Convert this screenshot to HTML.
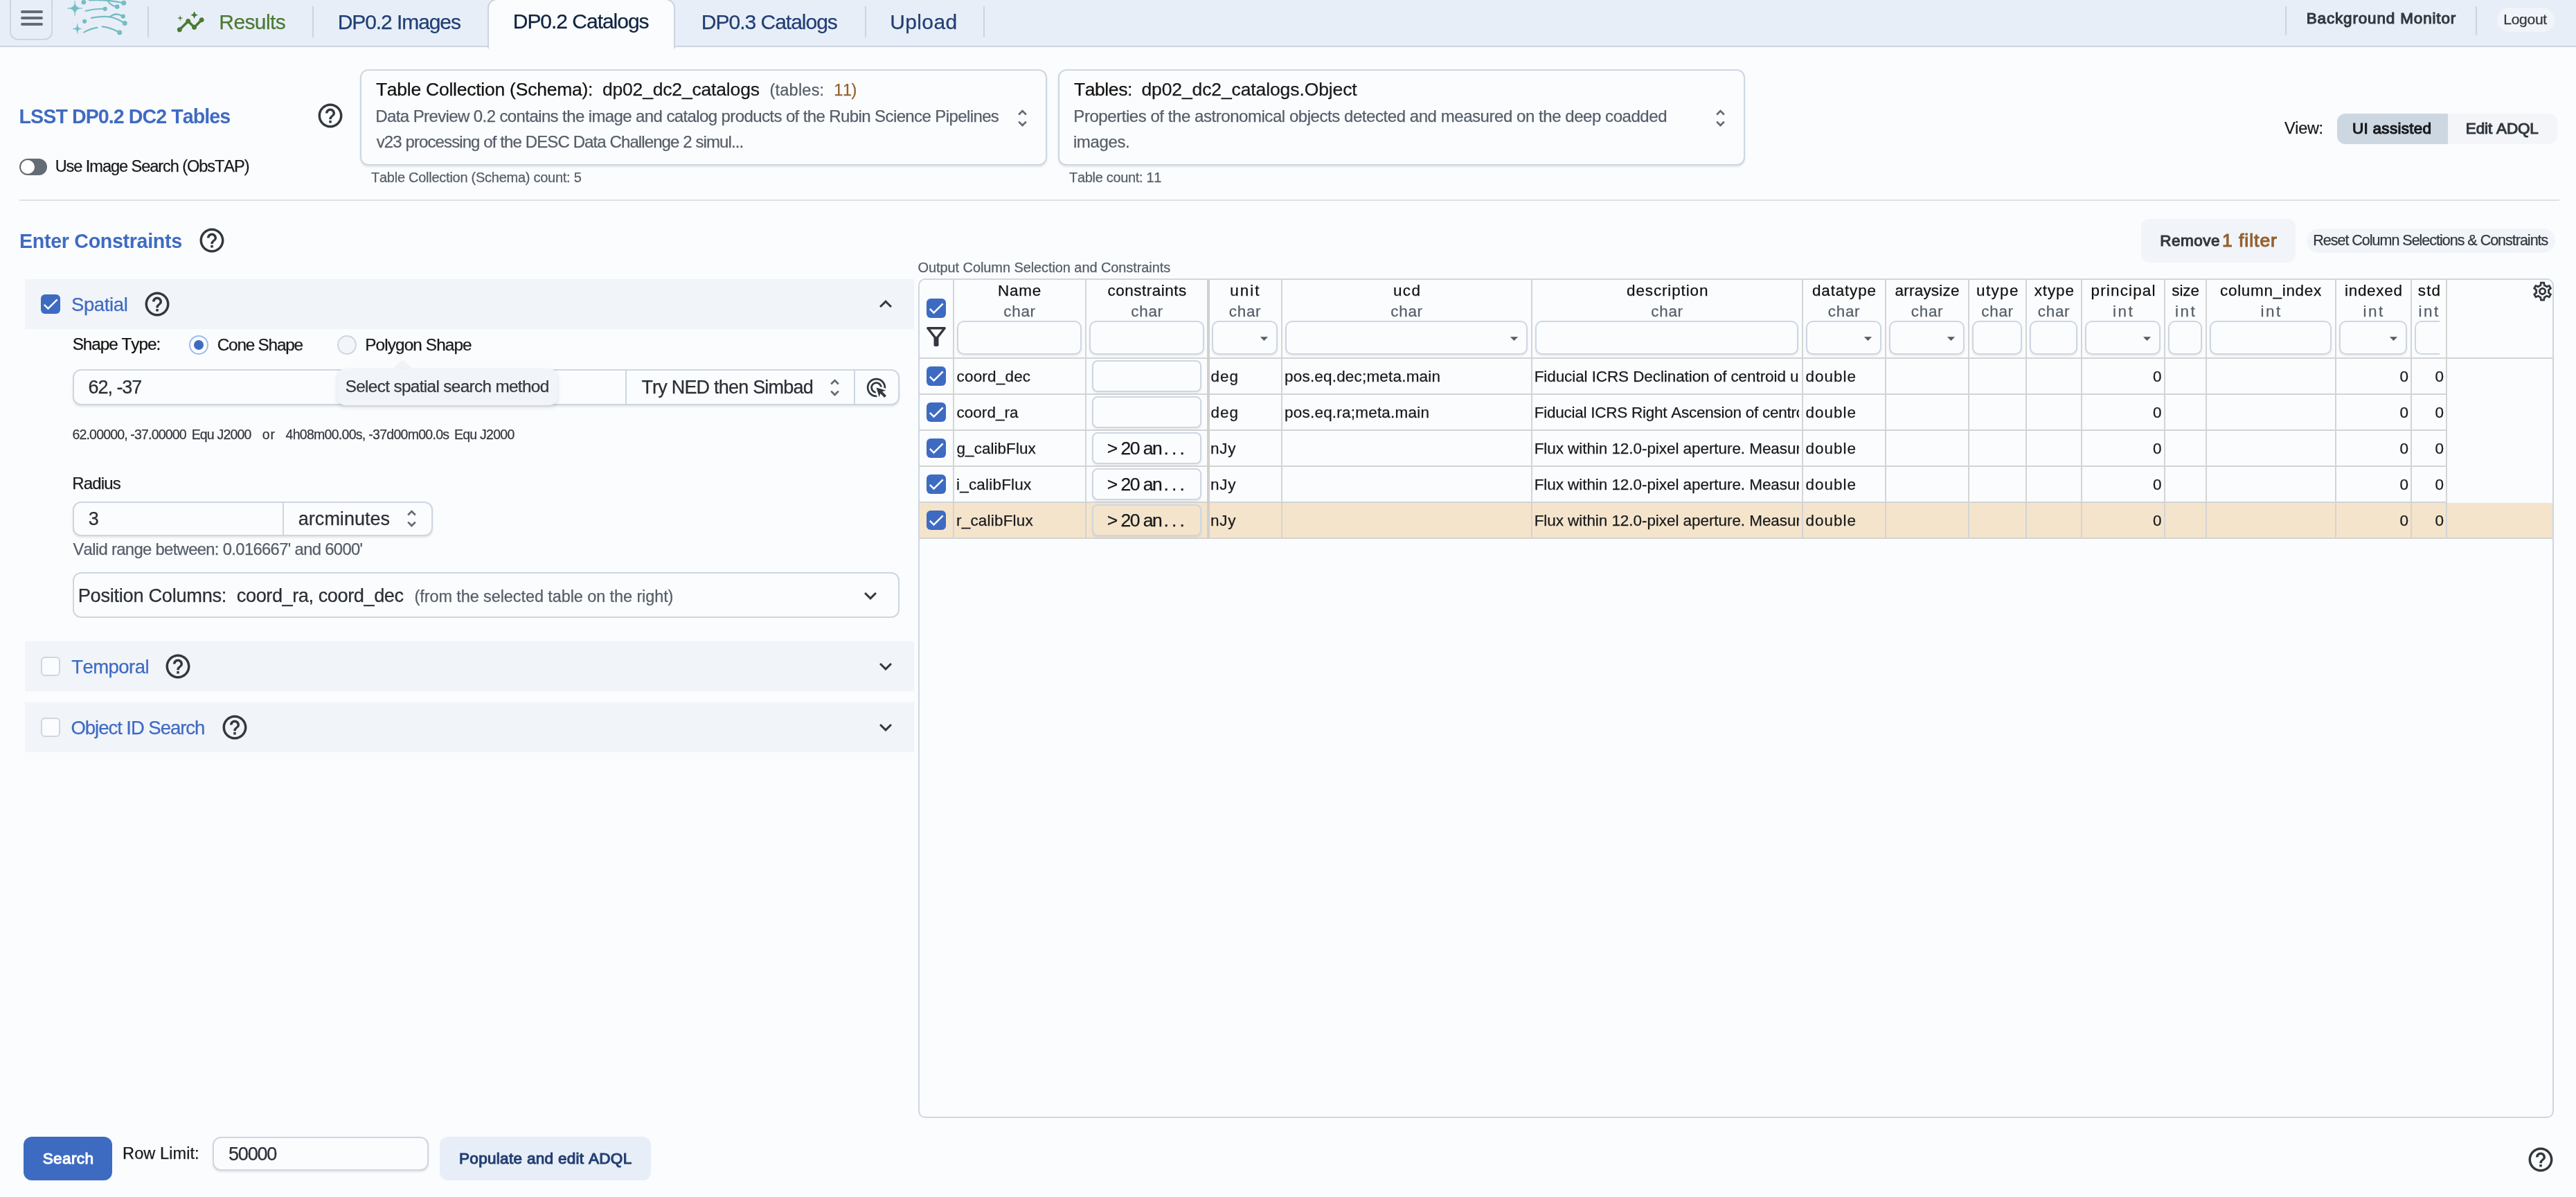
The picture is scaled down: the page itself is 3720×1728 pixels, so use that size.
<!DOCTYPE html>
<html><head><meta charset="utf-8"><title>TAP Search</title><style>html,body{margin:0;padding:0}
body{width:3720px;height:1728px;position:relative;overflow:hidden;background:#fbfcfe;font-family:"Liberation Sans",sans-serif;font-kerning:none}
.t{position:absolute;white-space:pre;font-kerning:none;-webkit-text-stroke:0.25px currentColor}
.b{position:absolute;box-sizing:content-box}
.i{position:absolute;display:block}
#root{position:absolute;left:0;top:0;width:3720px;height:1728px;will-change:transform}
</style></head><body><div id="root">
<div class="b" style="left:0px;top:0px;width:3720px;height:66px;background:#e8eef8;border-bottom:2px solid #cdd4df;"></div>
<div class="b" style="left:14.4px;top:-10px;width:58px;height:63.6px;border:2px solid #cfd5df;border-radius:12px;"></div>
<div class="b" style="left:30px;top:15.2px;width:32px;height:4px;background:#636b74;border-radius:2px;"></div>
<div class="b" style="left:30px;top:24px;width:32px;height:4px;background:#636b74;border-radius:2px;"></div>
<div class="b" style="left:30px;top:32.7px;width:32px;height:4px;background:#636b74;border-radius:2px;"></div>
<svg class="i" style="left:90px;top:0px;filter:blur(0.7px)" width="100" height="56" viewBox="90 0 100 56" fill="none" stroke="#74bdc2" stroke-width="2.3" stroke-linecap="round">
<path d="M108.1 1.5 Q107.7 12.4 119.1 12 Q107.7 11.6 108.1 22.8 Q108.5 11.6 97 12 Q108.5 12.4 108.1 1.5 Z" fill="#74bdc2" stroke="#74bdc2" stroke-width="0.6" stroke-linejoin="round"/>
<path d="M111.8 34.3 Q111.6 41.8 118.1 41.6 Q111.6 41.4 111.8 48.6 Q112 41.4 104.8 41.6 Q112 41.8 111.8 34.3 Z" fill="#74bdc2" stroke="#74bdc2" stroke-width="0.6" stroke-linejoin="round"/>
<circle cx="120.8" cy="3.3" r="3.3" fill="#74bdc2" stroke="none"/>
<circle cx="122.1" cy="30.8" r="3.1" fill="#74bdc2" stroke="none"/>
<path d="M123.6 15.8 Q137 12.3 150 12.8" stroke-width="2.1"/><circle cx="151.7" cy="12.8" r="3.1" fill="#74bdc2" stroke="none"/>
<path d="M129 0.3 Q155 -0.8 177 4"/><circle cx="178.7" cy="4.3" r="3.5" fill="#74bdc2" stroke="none"/>
<path d="M155.5 0.6 Q158.5 7.5 167.5 9.5"/><circle cx="169.2" cy="9.8" r="3.3" fill="#74bdc2" stroke="none"/>
<path d="M132 25.8 Q150 22.6 160.5 24.7 Q171 27.5 179 33" stroke-width="2.2"/><circle cx="180.2" cy="33.6" r="3.5" fill="#74bdc2" stroke="none"/>
<path d="M159 24 Q167 17.5 176.5 23"/><circle cx="177.7" cy="23.6" r="3.2" fill="#74bdc2" stroke="none"/>
<path d="M121.2 46.7 Q130 41.5 140.4 39.9" stroke-width="2.1"/>
<path d="M147.8 38.4 Q160 40 171 46"/><circle cx="172.7" cy="46.9" r="3.5" fill="#74bdc2" stroke="none"/>
</svg>
<div class="b" style="left:213px;top:9px;width:2px;height:45px;background:#cdd4df;"></div>
<svg class="i" style="left:253.65px;top:10.55px" width="42.5" height="42.5" viewBox="0 0 24 24" fill="#4a7a33"><path d="M21 8c-1.45 0-2.26 1.44-1.93 2.51l-3.55 3.56c-.3-.09-.74-.09-1.04 0l-2.55-2.55C12.27 10.45 11.46 9 10 9c-1.45 0-2.27 1.44-1.93 2.52l-4.56 4.55C2.44 15.74 1 16.55 1 18c0 1.1.9 2 2 2 1.45 0 2.26-1.44 1.93-2.51l4.55-4.56c.3.09.74.09 1.04 0l2.55 2.55C12.73 16.55 13.54 18 15 18c1.45 0 2.27-1.44 1.93-2.52l3.56-3.55c1.07.33 2.51-.48 2.51-1.93 0-1.1-.9-2-2-2z"/><path d="m15 9 .94-2.07L18 6l-2.06-.93L15 3l-.92 2.07L12 6l2.08.93zM3.5 11 4 9l2-.5L4 8l-.5-2L3 8l-2 .5L3 9z"/></svg>
<span class="t" style="left:316.34px;top:17px;font-size:30px;line-height:30px;color:#4a7a33;letter-spacing:-0.615px;">Results</span>
<div class="b" style="left:451px;top:9px;width:2px;height:45px;background:#cdd4df;"></div>
<span class="t" style="left:487.74px;top:17px;font-size:30px;line-height:30px;color:#213f73;letter-spacing:-1.077px;">DP0.2 Images</span>
<div class="b" style="left:704px;top:-2px;width:267px;height:70px;background:#fbfcfe;border:2px solid #cdd4df;border-radius:14px 14px 0 0;border-bottom:none;"></div>
<span class="t" style="left:740.74px;top:16px;font-size:30px;line-height:30px;color:#10233f;letter-spacing:-1.021px;">DP0.2 Catalogs</span>
<span class="t" style="left:1012.84px;top:17px;font-size:30px;line-height:30px;color:#213f73;letter-spacing:-1.006px;">DP0.3 Catalogs</span>
<div class="b" style="left:1249px;top:9px;width:2px;height:45px;background:#cdd4df;"></div>
<span class="t" style="left:1285.29px;top:17px;font-size:30px;line-height:30px;color:#213f73;letter-spacing:0.356px;">Upload</span>
<div class="b" style="left:1420px;top:9px;width:2px;height:45px;background:#cdd4df;"></div>
<div class="b" style="left:3300px;top:9px;width:2px;height:42px;background:#cdd4df;"></div>
<span class="t" style="left:3330.75px;top:16px;font-size:22.5px;line-height:22.5px;color:#32383e;-webkit-text-stroke-width:1.1px;letter-spacing:0.833px;">Background Monitor</span>
<div class="b" style="left:3575px;top:9px;width:2px;height:42px;background:#cdd4df;"></div>
<div class="b" style="left:3606px;top:11px;width:83px;height:35px;background:#f1f4f9;border-radius:18px;"></div>
<span class="t" style="left:3615.28px;top:17px;font-size:21px;line-height:21px;color:#32383e;letter-spacing:-0.271px;">Logout</span>
<span class="t" style="left:27.59px;top:154px;font-size:28.6px;line-height:28.6px;color:#3e6bc2;font-weight:700;-webkit-text-stroke-width:0;letter-spacing:-0.932px;">LSST DP0.2 DC2 Tables</span>
<svg class="i" style="left:456.00px;top:146.00px" width="42" height="42" viewBox="0 0 24 24" fill="#32383e"><path d="M11 18h2v-2h-2v2zm1-16C6.48 2 2 6.48 2 12s4.48 10 10 10 10-4.48 10-10S17.52 2 12 2zm0 18c-4.41 0-8-3.59-8-8s3.59-8 8-8 8 3.59 8 8-3.59 8-8 8zm0-14c-2.21 0-4 1.79-4 4h2c0-1.1.9-2 2-2s2 .9 2 2c0 2-3 1.75-3 5h2c0-2.25 3-2.5 3-5 0-2.21-1.79-4-4-4z"/></svg>
<div class="b" style="left:28px;top:229px;width:40px;height:24px;background:#636b74;border-radius:12px;"></div>
<div class="b" style="left:30px;top:231px;width:20px;height:20px;background:#fff;border-radius:10px;"></div>
<span class="t" style="left:79.69px;top:229px;font-size:23.5px;line-height:23.5px;color:#171a1c;letter-spacing:-1.035px;">Use Image Search (ObsTAP)</span>
<div class="b" style="left:520px;top:100px;width:988px;height:135px;background:#fbfcfe;border:2px solid #cdd7e1;border-radius:12px;box-shadow:0 2px 3px rgba(21,21,21,0.10);"></div>
<span class="t" style="left:542.90px;top:116px;font-size:26.5px;line-height:26.5px;color:#111;letter-spacing:-0.244px;">Table Collection (Schema):</span>
<span class="t" style="left:869.89px;top:116px;font-size:26.5px;line-height:26.5px;color:#171a1c;letter-spacing:-0.174px;">dp02_dc2_catalogs</span>
<span class="t" style="left:1111.54px;top:119px;font-size:23.5px;line-height:23.5px;color:#555e68;letter-spacing:0.220px;">(tables:</span>
<span class="t" style="left:1204.21px;top:119px;font-size:23.5px;line-height:23.5px;color:#93612f;letter-spacing:-0.359px;">11)</span>
<span class="t" style="left:542.33px;top:156px;font-size:24px;line-height:24px;color:#555e68;letter-spacing:-0.605px;">Data Preview 0.2 contains the image and catalog products of the Rubin Science Pipelines</span>
<span class="t" style="left:543.72px;top:193px;font-size:24px;line-height:24px;color:#555e68;letter-spacing:-0.898px;">v23 processing of the DESC Data Challenge 2 simul...</span>
<svg class="i" style="left:1459.50px;top:154.00px" width="33" height="33" viewBox="0 0 24 24" fill="#636b74"><path d="M12 5.83 15.17 9l1.41-1.41L12 3 7.41 7.59 8.83 9 12 5.83zm0 12.34L8.83 15l-1.41 1.41L12 21l4.59-4.59L15.17 15 12 18.17z"/></svg>
<span class="t" style="left:536.05px;top:246px;font-size:20px;line-height:20px;color:#555e68;letter-spacing:-0.260px;">Table Collection (Schema) count: 5</span>
<div class="b" style="left:1528px;top:100px;width:988px;height:135px;background:#fbfcfe;border:2px solid #cdd7e1;border-radius:12px;box-shadow:0 2px 3px rgba(21,21,21,0.10);"></div>
<span class="t" style="left:1550.90px;top:116px;font-size:26.5px;line-height:26.5px;color:#111;letter-spacing:-0.398px;">Tables:</span>
<span class="t" style="left:1648.39px;top:116px;font-size:26.5px;line-height:26.5px;color:#171a1c;letter-spacing:-0.109px;">dp02_dc2_catalogs.Object</span>
<span class="t" style="left:1550.33px;top:156px;font-size:24px;line-height:24px;color:#555e68;letter-spacing:-0.448px;">Properties of the astronomical objects detected and measured on the deep coadded</span>
<span class="t" style="left:1549.89px;top:193px;font-size:24px;line-height:24px;color:#555e68;letter-spacing:-0.373px;">images.</span>
<svg class="i" style="left:2467.50px;top:154.00px" width="33" height="33" viewBox="0 0 24 24" fill="#636b74"><path d="M12 5.83 15.17 9l1.41-1.41L12 3 7.41 7.59 8.83 9 12 5.83zm0 12.34L8.83 15l-1.41 1.41L12 21l4.59-4.59L15.17 15 12 18.17z"/></svg>
<span class="t" style="left:1544.05px;top:246px;font-size:20px;line-height:20px;color:#555e68;letter-spacing:-0.318px;">Table count: 11</span>
<span class="t" style="left:3298.90px;top:174px;font-size:23.5px;line-height:23.5px;color:#171a1c;letter-spacing:-0.304px;">View:</span>
<div class="b" style="left:3375px;top:164px;width:160px;height:44px;background:#cdd7e1;border-radius:12px 0 0 12px;"></div>
<div class="b" style="left:3535px;top:164px;width:158px;height:44px;background:#f3f5f9;border-radius:0 12px 12px 0;"></div>
<span class="t" style="left:3396.96px;top:175px;font-size:22.5px;line-height:22.5px;color:#171a1c;-webkit-text-stroke-width:1.1px;letter-spacing:0.289px;">UI assisted</span>
<span class="t" style="left:3560.85px;top:175px;font-size:22.5px;line-height:22.5px;color:#32383e;-webkit-text-stroke-width:1.1px;letter-spacing:-0.162px;">Edit ADQL</span>
<div class="b" style="left:28px;top:288px;width:3668px;height:2px;background:#dde1e8;"></div>
<span class="t" style="left:28.09px;top:334px;font-size:28.6px;line-height:28.6px;color:#3e6bc2;font-weight:700;-webkit-text-stroke-width:0;letter-spacing:-0.304px;">Enter Constraints</span>
<svg class="i" style="left:285.00px;top:326.00px" width="42" height="42" viewBox="0 0 24 24" fill="#32383e"><path d="M11 18h2v-2h-2v2zm1-16C6.48 2 2 6.48 2 12s4.48 10 10 10 10-4.48 10-10S17.52 2 12 2zm0 18c-4.41 0-8-3.59-8-8s3.59-8 8-8 8 3.59 8 8-3.59 8-8 8zm0-14c-2.21 0-4 1.79-4 4h2c0-1.1.9-2 2-2s2 .9 2 2c0 2-3 1.75-3 5h2c0-2.25 3-2.5 3-5 0-2.21-1.79-4-4-4z"/></svg>
<div class="b" style="left:36px;top:403px;width:1284px;height:71.5px;background:#f1f4f9;"></div>
<div class="b" style="left:59px;top:425px;width:28px;height:28px;background:#3e6bc2;border-radius:6px;"></div>
<svg class="i" style="left:59.00px;top:425.00px" width="28" height="28" viewBox="0 0 24 24" fill="#fff"><path d="M9 16.17 4.83 12l-1.42 1.41L9 19 21 7l-1.41-1.41z"/></svg>
<span class="t" style="left:102.95px;top:426px;font-size:27.5px;line-height:27.5px;color:#3e6bc2;letter-spacing:-0.366px;">Spatial</span>
<svg class="i" style="left:206.00px;top:418.00px" width="42" height="42" viewBox="0 0 24 24" fill="#32383e"><path d="M11 18h2v-2h-2v2zm1-16C6.48 2 2 6.48 2 12s4.48 10 10 10 10-4.48 10-10S17.52 2 12 2zm0 18c-4.41 0-8-3.59-8-8s3.59-8 8-8 8 3.59 8 8-3.59 8-8 8zm0-14c-2.21 0-4 1.79-4 4h2c0-1.1.9-2 2-2s2 .9 2 2c0 2-3 1.75-3 5h2c0-2.25 3-2.5 3-5 0-2.21-1.79-4-4-4z"/></svg>
<svg class="i" style="left:1261.00px;top:421.00px" width="36" height="36" viewBox="0 0 24 24" fill="#32383e"><path d="M7.41 15.41 12 10.83l4.59 4.58L18 14l-6-6-6 6z"/></svg>
<span class="t" style="left:104.70px;top:485px;font-size:24.3px;line-height:24.3px;color:#111;letter-spacing:-1.027px;">Shape Type:</span>
<div class="b" style="left:273px;top:484px;width:24px;height:24px;background:#fbfcfe;border:2px solid #9fbdeb;border-radius:14px;"></div>
<div class="b" style="left:280px;top:491px;width:14px;height:14px;background:#3e6bc2;border-radius:7px;"></div>
<span class="t" style="left:313.77px;top:486px;font-size:24.3px;line-height:24.3px;color:#171a1c;letter-spacing:-1.200px;">Cone Shape</span>
<div class="b" style="left:487px;top:484px;width:24px;height:24px;background:#f2f5f9;border:2px solid #cdd7e1;border-radius:14px;"></div>
<span class="t" style="left:527.31px;top:486px;font-size:24.3px;line-height:24.3px;color:#171a1c;letter-spacing:-0.880px;">Polygon Shape</span>
<div class="b" style="left:105px;top:533px;width:1190px;height:48px;background:#fbfcfe;border:2px solid #cdd7e1;border-radius:12px;box-shadow:0 2px 3px rgba(21,21,21,0.10);"></div>
<span class="t" style="left:127.53px;top:546px;font-size:27px;line-height:27px;color:#2a2f35;letter-spacing:-1.038px;">62, -37</span>
<div class="b" style="left:903px;top:535px;width:2px;height:48px;background:#cdd7e1;"></div>
<span class="t" style="left:926.39px;top:546px;font-size:27px;line-height:27px;color:#2a2f35;letter-spacing:-0.791px;">Try NED then Simbad</span>
<svg class="i" style="left:1188.80px;top:543.00px" width="33" height="33" viewBox="0 0 24 24" fill="#636b74"><path d="M12 5.83 15.17 9l1.41-1.41L12 3 7.41 7.59 8.83 9 12 5.83zm0 12.34L8.83 15l-1.41 1.41L12 21l4.59-4.59L15.17 15 12 18.17z"/></svg>
<div class="b" style="left:1233px;top:535px;width:2px;height:48px;background:#cdd7e1;"></div>
<svg class="i" style="left:1249.00px;top:542.90px" width="33" height="33" viewBox="0 0 24 24" fill="#32383e"><path d="M11.71 17.99C8.53 17.84 6 15.22 6 12c0-3.31 2.69-6 6-6 3.22 0 5.84 2.53 5.99 5.71l-2.1-.63C15.48 9.31 13.89 8 12 8c-2.21 0-4 1.79-4 4 0 1.89 1.31 3.48 3.08 3.89l.63 2.1zM22 12c0 .3-.01.6-.04.9l-1.97-.59c.01-.1.01-.21.01-.31 0-4.42-3.58-8-8-8s-8 3.58-8 8 3.58 8 8 8c.1 0 .21 0 .31-.01l.59 1.97c-.3.03-.6.04-.9.04-5.52 0-10-4.48-10-10S6.48 2 12 2s10 4.48 10 10zm-3.77 4.26L22 15l-10-3 3 10 1.26-3.77 4.27 4.27 1.98-1.98-4.28-4.26z"/></svg>
<div class="b" style="left:573.2px;top:523.5px;width:17px;height:17px;background:#f0f4f8;transform:rotate(45deg);box-shadow:0 0 3px rgba(21,21,21,0.10)"></div>
<div class="b" style="left:487.2px;top:532.2px;width:317.6px;height:52.5px;background:#f1f4f9;border-radius:12px;box-shadow:0 3px 6px rgba(21,21,21,0.12);"></div>
<span class="t" style="left:498.70px;top:546px;font-size:24.3px;line-height:24.3px;color:#32383e;letter-spacing:-0.646px;">Select spatial search method</span>
<span class="t" style="left:104.51px;top:618px;font-size:19.5px;line-height:19.5px;color:#32383e;letter-spacing:-0.830px;">62.00000, -37.00000</span>
<span class="t" style="left:276.70px;top:618px;font-size:19.5px;line-height:19.5px;color:#32383e;letter-spacing:-0.835px;">Equ J2000</span>
<span class="t" style="left:378.68px;top:618px;font-size:19.5px;line-height:19.5px;color:#32383e;letter-spacing:1.104px;">or</span>
<span class="t" style="left:412.55px;top:618px;font-size:19.5px;line-height:19.5px;color:#32383e;letter-spacing:-0.717px;">4h08m00.00s, -37d00m00.0s</span>
<span class="t" style="left:655.90px;top:618px;font-size:19.5px;line-height:19.5px;color:#32383e;letter-spacing:-0.735px;">Equ J2000</span>
<span class="t" style="left:104.33px;top:686px;font-size:24px;line-height:24px;color:#171a1c;letter-spacing:-0.834px;">Radius</span>
<div class="b" style="left:105px;top:724px;width:516px;height:46px;background:#fbfcfe;border:2px solid #cdd7e1;border-radius:12px;box-shadow:0 2px 3px rgba(21,21,21,0.10);"></div>
<span class="t" style="left:127.77px;top:736px;font-size:27px;line-height:27px;color:#2a2f35;">3</span>
<div class="b" style="left:408px;top:726px;width:2px;height:46px;background:#cdd7e1;"></div>
<span class="t" style="left:430.85px;top:736px;font-size:27px;line-height:27px;color:#2a2f35;letter-spacing:0.008px;">arcminutes</span>
<svg class="i" style="left:577.60px;top:732.00px" width="33" height="33" viewBox="0 0 24 24" fill="#636b74"><path d="M12 5.83 15.17 9l1.41-1.41L12 3 7.41 7.59 8.83 9 12 5.83zm0 12.34L8.83 15l-1.41 1.41L12 21l4.59-4.59L15.17 15 12 18.17z"/></svg>
<span class="t" style="left:105.40px;top:781px;font-size:23.8px;line-height:23.8px;color:#555e68;letter-spacing:-0.658px;">Valid range between: 0.016667&#x27; and 6000&#x27;</span>
<div class="b" style="left:105px;top:826.3px;width:1190px;height:62px;background:#fbfcfe;border:2px solid #cdd7e1;border-radius:12px;"></div>
<span class="t" style="left:112.77px;top:846px;font-size:27.2px;line-height:27.2px;color:#2a2f35;letter-spacing:-0.281px;">Position Columns:</span>
<span class="t" style="left:341.84px;top:846px;font-size:27.2px;line-height:27.2px;color:#2a2f35;letter-spacing:-0.451px;">coord_ra, coord_dec</span>
<span class="t" style="left:598.54px;top:850px;font-size:23.5px;line-height:23.5px;color:#555e68;letter-spacing:-0.097px;">(from the selected table on the right)</span>
<svg class="i" style="left:1238.50px;top:841.50px" width="36" height="36" viewBox="0 0 24 24" fill="#32383e"><path d="M7.41 8.59 12 13.17l4.59-4.58L18 10l-6 6-6-6 1.41-1.41z"/></svg>
<div class="b" style="left:36px;top:926px;width:1284px;height:71.5px;background:#f1f4f9;"></div>
<div class="b" style="left:59px;top:948px;width:24px;height:24px;background:#fbfcfe;border:2px solid #cdd7e1;border-radius:6px;"></div>
<span class="t" style="left:103.18px;top:949px;font-size:27.5px;line-height:27.5px;color:#3e6bc2;letter-spacing:-0.528px;">Temporal</span>
<svg class="i" style="left:236.00px;top:941.00px" width="42" height="42" viewBox="0 0 24 24" fill="#32383e"><path d="M11 18h2v-2h-2v2zm1-16C6.48 2 2 6.48 2 12s4.48 10 10 10 10-4.48 10-10S17.52 2 12 2zm0 18c-4.41 0-8-3.59-8-8s3.59-8 8-8 8 3.59 8 8-3.59 8-8 8zm0-14c-2.21 0-4 1.79-4 4h2c0-1.1.9-2 2-2s2 .9 2 2c0 2-3 1.75-3 5h2c0-2.25 3-2.5 3-5 0-2.21-1.79-4-4-4z"/></svg>
<svg class="i" style="left:1261.00px;top:944.00px" width="36" height="36" viewBox="0 0 24 24" fill="#32383e"><path d="M7.41 8.59 12 13.17l4.59-4.58L18 10l-6 6-6-6 1.41-1.41z"/></svg>
<div class="b" style="left:36px;top:1014px;width:1284px;height:71.5px;background:#f1f4f9;"></div>
<div class="b" style="left:59px;top:1036px;width:24px;height:24px;background:#fbfcfe;border:2px solid #cdd7e1;border-radius:6px;"></div>
<span class="t" style="left:102.50px;top:1037px;font-size:27.5px;line-height:27.5px;color:#3e6bc2;letter-spacing:-1.040px;">Object ID Search</span>
<svg class="i" style="left:318.00px;top:1029.00px" width="42" height="42" viewBox="0 0 24 24" fill="#32383e"><path d="M11 18h2v-2h-2v2zm1-16C6.48 2 2 6.48 2 12s4.48 10 10 10 10-4.48 10-10S17.52 2 12 2zm0 18c-4.41 0-8-3.59-8-8s3.59-8 8-8 8 3.59 8 8-3.59 8-8 8zm0-14c-2.21 0-4 1.79-4 4h2c0-1.1.9-2 2-2s2 .9 2 2c0 2-3 1.75-3 5h2c0-2.25 3-2.5 3-5 0-2.21-1.79-4-4-4z"/></svg>
<svg class="i" style="left:1261.00px;top:1032.00px" width="36" height="36" viewBox="0 0 24 24" fill="#32383e"><path d="M7.41 8.59 12 13.17l4.59-4.58L18 10l-6 6-6-6 1.41-1.41z"/></svg>
<div class="b" style="left:34px;top:1641px;width:128px;height:63px;background:#3e6bc2;border-radius:12px;"></div>
<span class="t" style="left:61.68px;top:1662px;font-size:22.5px;line-height:22.5px;color:#fff;-webkit-text-stroke-width:1.1px;letter-spacing:0.399px;">Search</span>
<span class="t" style="left:177.07px;top:1654px;font-size:23.5px;line-height:23.5px;color:#171a1c;letter-spacing:0.099px;">Row Limit:</span>
<div class="b" style="left:307px;top:1641px;width:308px;height:45px;background:#fbfcfe;border:2px solid #cdd7e1;border-radius:12px;box-shadow:0 2px 3px rgba(21,21,21,0.10);"></div>
<span class="t" style="left:330.02px;top:1653px;font-size:27px;line-height:27px;color:#2a2f35;letter-spacing:-1.211px;">50000</span>
<div class="b" style="left:635px;top:1641px;width:305px;height:63px;background:#e7eef8;border-radius:12px;"></div>
<span class="t" style="left:663.05px;top:1662px;font-size:22.5px;line-height:22.5px;color:#243f72;-webkit-text-stroke-width:1.1px;letter-spacing:0.306px;">Populate and edit ADQL</span>
<svg class="i" style="left:3648.00px;top:1653.00px" width="42" height="42" viewBox="0 0 24 24" fill="#32383e"><path d="M11 18h2v-2h-2v2zm1-16C6.48 2 2 6.48 2 12s4.48 10 10 10 10-4.48 10-10S17.52 2 12 2zm0 18c-4.41 0-8-3.59-8-8s3.59-8 8-8 8 3.59 8 8-3.59 8-8 8zm0-14c-2.21 0-4 1.79-4 4h2c0-1.1.9-2 2-2s2 .9 2 2c0 2-3 1.75-3 5h2c0-2.25 3-2.5 3-5 0-2.21-1.79-4-4-4z"/></svg>
<div class="b" style="left:3092px;top:316px;width:223px;height:63px;background:#f1f4f9;border-radius:12px;"></div>
<span class="t" style="left:3119.15px;top:337px;font-size:22.5px;line-height:22.5px;color:#32383e;-webkit-text-stroke-width:1.1px;letter-spacing:0.513px;">Remove</span>
<span class="t" style="left:3208.98px;top:334px;font-size:26.5px;line-height:26.5px;color:#93612f;-webkit-text-stroke-width:1.1px;letter-spacing:0.971px;">1 filter</span>
<div class="b" style="left:3331px;top:330px;width:359px;height:35px;background:#f1f4f9;border-radius:18px;"></div>
<span class="t" style="left:3340.24px;top:337px;font-size:21.5px;line-height:21.5px;color:#32383e;letter-spacing:-1.010px;">Reset Column Selections &amp; Constraints</span>
<span class="t" style="left:1325.55px;top:376px;font-size:20px;line-height:20px;color:#555e68;letter-spacing:-0.087px;">Output Column Selection and Constraints</span>
<div class="b" style="left:1326px;top:402px;width:2358px;height:1208px;background:#fbfcfe;border:2px solid #cdd7e1;border-radius:10px;"></div>
<div class="b" style="left:1328px;top:726px;width:2358px;height:50px;background:#f5e4cc;"></div>
<div class="b" style="left:1328px;top:515.5px;width:2358px;height:2px;background:#d4d4d4;"></div>
<div class="b" style="left:1328px;top:567.5px;width:2206px;height:2px;background:#d4d4d4;"></div>
<div class="b" style="left:1328px;top:619.5px;width:2206px;height:2px;background:#d4d4d4;"></div>
<div class="b" style="left:1328px;top:671.5px;width:2206px;height:2px;background:#d4d4d4;"></div>
<div class="b" style="left:1328px;top:723.5px;width:2206px;height:2px;background:#d4d4d4;"></div>
<div class="b" style="left:1328px;top:775.5px;width:2358px;height:2px;background:#d4d4d4;"></div>
<div class="b" style="left:1376px;top:404px;width:2px;height:373.5px;background:#d4d4d4;"></div>
<div class="b" style="left:1567px;top:404px;width:2px;height:373.5px;background:#d4d4d4;"></div>
<div class="b" style="left:1743px;top:404px;width:4px;height:373.5px;background:#d0d0d0;"></div>
<div class="b" style="left:1850px;top:404px;width:2px;height:373.5px;background:#d4d4d4;"></div>
<div class="b" style="left:2211px;top:404px;width:2px;height:373.5px;background:#d4d4d4;"></div>
<div class="b" style="left:2602px;top:404px;width:2px;height:373.5px;background:#d4d4d4;"></div>
<div class="b" style="left:2722px;top:404px;width:2px;height:373.5px;background:#d4d4d4;"></div>
<div class="b" style="left:2842px;top:404px;width:2px;height:373.5px;background:#d4d4d4;"></div>
<div class="b" style="left:2925px;top:404px;width:2px;height:373.5px;background:#d4d4d4;"></div>
<div class="b" style="left:3005px;top:404px;width:2px;height:373.5px;background:#d4d4d4;"></div>
<div class="b" style="left:3125px;top:404px;width:2px;height:373.5px;background:#d4d4d4;"></div>
<div class="b" style="left:3185px;top:404px;width:2px;height:373.5px;background:#d4d4d4;"></div>
<div class="b" style="left:3372px;top:404px;width:2px;height:373.5px;background:#d4d4d4;"></div>
<div class="b" style="left:3481px;top:404px;width:2px;height:373.5px;background:#d4d4d4;"></div>
<div class="b" style="left:3532px;top:404px;width:2px;height:373.5px;background:#d4d4d4;"></div>
<span class="t" style="left:1440.90px;top:409px;font-size:22.5px;line-height:22.5px;color:#111;letter-spacing:0.776px;">Name</span>
<span class="t" style="left:1449.29px;top:439px;font-size:22.5px;line-height:22.5px;color:#555e68;letter-spacing:0.687px;">char</span>
<div class="b" style="left:1382.2px;top:463px;width:176px;height:44.5px;background:#fbfcfe;border:2px solid #cdd7e1;border-radius:10px;box-shadow:0 2px 3px rgba(21,21,21,0.08);"></div>
<span class="t" style="left:1599.54px;top:409px;font-size:22.5px;line-height:22.5px;color:#111;letter-spacing:0.497px;">constraints</span>
<span class="t" style="left:1633.29px;top:439px;font-size:22.5px;line-height:22.5px;color:#555e68;letter-spacing:0.687px;">char</span>
<div class="b" style="left:1573.2px;top:463px;width:162px;height:44.5px;background:#fbfcfe;border:2px solid #cdd7e1;border-radius:10px;box-shadow:0 2px 3px rgba(21,21,21,0.08);"></div>
<span class="t" style="left:1776.29px;top:409px;font-size:22.5px;line-height:22.5px;color:#111;letter-spacing:1.950px;">unit</span>
<span class="t" style="left:1774.79px;top:439px;font-size:22.5px;line-height:22.5px;color:#555e68;letter-spacing:0.687px;">char</span>
<div class="b" style="left:1750.2px;top:463px;width:91px;height:44.5px;background:#fbfcfe;border:2px solid #cdd7e1;border-radius:10px;box-shadow:0 2px 3px rgba(21,21,21,0.08);"></div>
<svg class="i" style="left:1811.50px;top:474.50px" width="27" height="27" viewBox="0 0 24 24" fill="#555e68"><path d="m7 10 5 5 5-5z"/></svg>
<span class="t" style="left:2012.04px;top:409px;font-size:22.5px;line-height:22.5px;color:#111;letter-spacing:1.317px;">ucd</span>
<span class="t" style="left:2008.29px;top:439px;font-size:22.5px;line-height:22.5px;color:#555e68;letter-spacing:0.687px;">char</span>
<div class="b" style="left:1856.2px;top:463px;width:346px;height:44.5px;background:#fbfcfe;border:2px solid #cdd7e1;border-radius:10px;box-shadow:0 2px 3px rgba(21,21,21,0.08);"></div>
<svg class="i" style="left:2172.50px;top:474.50px" width="27" height="27" viewBox="0 0 24 24" fill="#555e68"><path d="m7 10 5 5 5-5z"/></svg>
<span class="t" style="left:2349.06px;top:409px;font-size:22.5px;line-height:22.5px;color:#111;letter-spacing:0.860px;">description</span>
<span class="t" style="left:2384.29px;top:439px;font-size:22.5px;line-height:22.5px;color:#555e68;letter-spacing:0.687px;">char</span>
<div class="b" style="left:2217.2px;top:463px;width:376px;height:44.5px;background:#fbfcfe;border:2px solid #cdd7e1;border-radius:10px;box-shadow:0 2px 3px rgba(21,21,21,0.08);"></div>
<span class="t" style="left:2617.06px;top:409px;font-size:22.5px;line-height:22.5px;color:#111;letter-spacing:0.804px;">datatype</span>
<span class="t" style="left:2639.79px;top:439px;font-size:22.5px;line-height:22.5px;color:#555e68;letter-spacing:0.687px;">char</span>
<div class="b" style="left:2608.2px;top:463px;width:105px;height:44.5px;background:#fbfcfe;border:2px solid #cdd7e1;border-radius:10px;box-shadow:0 2px 3px rgba(21,21,21,0.08);"></div>
<svg class="i" style="left:2683.50px;top:474.50px" width="27" height="27" viewBox="0 0 24 24" fill="#555e68"><path d="m7 10 5 5 5-5z"/></svg>
<span class="t" style="left:2736.54px;top:409px;font-size:22.5px;line-height:22.5px;color:#111;letter-spacing:0.210px;">arraysize</span>
<span class="t" style="left:2759.79px;top:439px;font-size:22.5px;line-height:22.5px;color:#555e68;letter-spacing:0.687px;">char</span>
<div class="b" style="left:2728.2px;top:463px;width:105px;height:44.5px;background:#fbfcfe;border:2px solid #cdd7e1;border-radius:10px;box-shadow:0 2px 3px rgba(21,21,21,0.08);"></div>
<svg class="i" style="left:2803.50px;top:474.50px" width="27" height="27" viewBox="0 0 24 24" fill="#555e68"><path d="m7 10 5 5 5-5z"/></svg>
<span class="t" style="left:2854.04px;top:409px;font-size:22.5px;line-height:22.5px;color:#111;letter-spacing:1.355px;">utype</span>
<span class="t" style="left:2861.29px;top:439px;font-size:22.5px;line-height:22.5px;color:#555e68;letter-spacing:0.687px;">char</span>
<div class="b" style="left:2848.2px;top:463px;width:68px;height:44.5px;background:#fbfcfe;border:2px solid #cdd7e1;border-radius:10px;box-shadow:0 2px 3px rgba(21,21,21,0.08);"></div>
<span class="t" style="left:2937.75px;top:409px;font-size:22.5px;line-height:22.5px;color:#111;letter-spacing:0.869px;">xtype</span>
<span class="t" style="left:2942.79px;top:439px;font-size:22.5px;line-height:22.5px;color:#555e68;letter-spacing:0.687px;">char</span>
<div class="b" style="left:2931.2px;top:463px;width:65px;height:44.5px;background:#fbfcfe;border:2px solid #cdd7e1;border-radius:10px;box-shadow:0 2px 3px rgba(21,21,21,0.08);"></div>
<span class="t" style="left:3019.55px;top:409px;font-size:22.5px;line-height:22.5px;color:#111;letter-spacing:1.145px;">principal</span>
<span class="t" style="left:3050.99px;top:439px;font-size:22.5px;line-height:22.5px;color:#555e68;letter-spacing:2.453px;">int</span>
<div class="b" style="left:3011.2px;top:463px;width:105px;height:44.5px;background:#fbfcfe;border:2px solid #cdd7e1;border-radius:10px;box-shadow:0 2px 3px rgba(21,21,21,0.08);"></div>
<svg class="i" style="left:3086.50px;top:474.50px" width="27" height="27" viewBox="0 0 24 24" fill="#555e68"><path d="m7 10 5 5 5-5z"/></svg>
<span class="t" style="left:3136.37px;top:409px;font-size:22.5px;line-height:22.5px;color:#111;letter-spacing:-0.129px;">size</span>
<span class="t" style="left:3140.99px;top:439px;font-size:22.5px;line-height:22.5px;color:#555e68;letter-spacing:2.453px;">int</span>
<div class="b" style="left:3131.2px;top:463px;width:45px;height:44.5px;background:#fbfcfe;border:2px solid #cdd7e1;border-radius:10px;box-shadow:0 2px 3px rgba(21,21,21,0.08);"></div>
<span class="t" style="left:3206.04px;top:409px;font-size:22.5px;line-height:22.5px;color:#111;letter-spacing:0.669px;">column_index</span>
<span class="t" style="left:3264.49px;top:439px;font-size:22.5px;line-height:22.5px;color:#555e68;letter-spacing:2.453px;">int</span>
<div class="b" style="left:3191.2px;top:463px;width:172px;height:44.5px;background:#fbfcfe;border:2px solid #cdd7e1;border-radius:10px;box-shadow:0 2px 3px rgba(21,21,21,0.08);"></div>
<span class="t" style="left:3385.99px;top:409px;font-size:22.5px;line-height:22.5px;color:#111;letter-spacing:0.690px;">indexed</span>
<span class="t" style="left:3412.49px;top:439px;font-size:22.5px;line-height:22.5px;color:#555e68;letter-spacing:2.453px;">int</span>
<div class="b" style="left:3378.2px;top:463px;width:94px;height:44.5px;background:#fbfcfe;border:2px solid #cdd7e1;border-radius:10px;box-shadow:0 2px 3px rgba(21,21,21,0.08);"></div>
<svg class="i" style="left:3442.50px;top:474.50px" width="27" height="27" viewBox="0 0 24 24" fill="#555e68"><path d="m7 10 5 5 5-5z"/></svg>
<span class="t" style="left:3491.87px;top:409px;font-size:22.5px;line-height:22.5px;color:#111;letter-spacing:1.031px;">std</span>
<span class="t" style="left:3492.49px;top:439px;font-size:22.5px;line-height:22.5px;color:#555e68;letter-spacing:2.453px;">int</span>
<div class="b" style="left:3487.2px;top:463px;width:36px;height:52px;overflow:hidden"><div class="b" style="left:0;top:0;width:60px;height:44.5px;border:2px solid #cdd7e1;border-radius:10px;background:#fbfcfe"></div></div>
<div class="b" style="left:1338px;top:431px;width:28px;height:28px;background:#3e6bc2;border-radius:6px;"></div>
<svg class="i" style="left:1338.00px;top:431.00px" width="28" height="28" viewBox="0 0 24 24" fill="#fff"><path d="M9 16.17 4.83 12l-1.42 1.41L9 19 21 7l-1.41-1.41z"/></svg>
<svg class="i" style="left:1331.00px;top:465.00px" width="42" height="42" viewBox="0 0 24 24" fill="#32383e"><path d="M7 6h10l-5.01 6.3L7 6zm-2.75-.39C6.27 8.2 10 13 10 13v6c0 .55.45 1 1 1h2c.55 0 1-.45 1-1v-6s3.72-4.8 5.74-7.39c.51-.66.04-1.61-.79-1.61H5.04c-.83 0-1.3.95-.79 1.61z"/></svg>
<svg class="i" style="left:3654.90px;top:403.90px" width="33.2" height="33.2" viewBox="0 0 24 24" fill="#32383e"><path d="M19.43 12.98c.04-.32.07-.64.07-.98 0-.34-.03-.66-.07-.98l2.11-1.65c.19-.15.24-.42.12-.64l-2-3.46c-.09-.16-.26-.25-.44-.25-.06 0-.12.01-.17.03l-2.49 1c-.52-.4-1.08-.73-1.69-.98l-.38-2.65C14.46 2.18 14.25 2 14 2h-4c-.25 0-.46.18-.49.42l-.38 2.65c-.61.25-1.17.59-1.69.98l-2.49-1c-.06-.02-.12-.03-.18-.03-.17 0-.34.09-.43.25l-2 3.46c-.13.22-.07.49.12.64l2.11 1.65c-.04.32-.07.65-.07.98 0 .33.03.66.07.98l-2.11 1.65c-.19.15-.24.42-.12.64l2 3.46c.09.16.26.25.44.25.06 0 .12-.01.17-.03l2.49-1c.52.4 1.08.73 1.69.98l.38 2.65c.03.24.24.42.49.42h4c.25 0 .46-.18.49-.42l.38-2.65c.61-.25 1.17-.59 1.69-.98l2.49 1c.06.02.12.03.18.03.17 0 .34-.09.43-.25l2-3.46c.12-.22.07-.49-.12-.64l-2.11-1.65zm-1.98-1.71c.04.31.05.52.05.73 0 .21-.02.43-.05.73l-.14 1.13.89.7 1.08.84-.7 1.21-1.27-.51-1.04-.42-.9.68c-.43.32-.84.56-1.25.73l-1.06.43-.16 1.13-.2 1.35h-1.4l-.19-1.35-.16-1.13-1.06-.43c-.43-.18-.83-.41-1.23-.71l-.91-.7-1.06.43-1.27.51-.7-1.21 1.08-.84.89-.7-.14-1.13c-.03-.31-.05-.54-.05-.74s.02-.43.05-.73l.14-1.13-.89-.7-1.08-.84.7-1.21 1.27.51 1.04.42.9-.68c.43-.32.84-.56 1.25-.73l1.06-.43.16-1.13.2-1.35h1.39l.19 1.35.16 1.13 1.06.43c.43.18.83.41 1.23.71l.91.7 1.06-.43 1.27-.51.7 1.21-1.07.85-.89.7.14 1.13zM12 8c-2.21 0-4 1.79-4 4s1.790 4 4 4 4-1.79 4-4-1.79-4-4-4zm0 6c-1.1 0-2-.9-2-2s.9-2 2-2 2 .9 2 2-.9 2-2 2z"/></svg>
<div class="b" style="left:1338px;top:529.0px;width:28px;height:28px;background:#3e6bc2;border-radius:6px;"></div>
<svg class="i" style="left:1338.00px;top:529.00px" width="28" height="28" viewBox="0 0 24 24" fill="#fff"><path d="M9 16.17 4.83 12l-1.42 1.41L9 19 21 7l-1.41-1.41z"/></svg>
<span class="t" style="left:1381.54px;top:533px;font-size:22.5px;line-height:22.5px;color:#171a1c;letter-spacing:0.184px;">coord_dec</span>
<div class="b" style="left:1577px;top:520.0px;width:154px;height:41.5px;background:#fbfcfe;border:2px solid #cdd7e1;border-radius:8px;box-shadow:0 2px 3px rgba(21,21,21,0.08);"></div>
<span class="t" style="left:1748.56px;top:533px;font-size:22.5px;line-height:22.5px;color:#171a1c;letter-spacing:0.927px;">deg</span>
<span class="t" style="left:1855.05px;top:533px;font-size:22.5px;line-height:22.5px;color:#171a1c;letter-spacing:0.186px;">pos.eq.dec;meta.main</span>
<div class="b" style="left:2213.65px;top:529.00px;width:384.35px;height:30.5px;overflow:hidden"><span class="t" style="left:2px;top:4px;font-size:22.5px;line-height:22.5px;color:#171a1c;letter-spacing:-0.088px">Fiducial ICRS Declination of centroid used for database indexing</span></div>
<span class="t" style="left:2607.56px;top:533px;font-size:22.5px;line-height:22.5px;color:#171a1c;letter-spacing:0.976px;">double</span>
<span class="t" style="left:3108.92px;top:533px;font-size:22.5px;line-height:22.5px;color:#171a1c;">0</span>
<span class="t" style="left:3465.42px;top:533px;font-size:22.5px;line-height:22.5px;color:#171a1c;">0</span>
<span class="t" style="left:3516.42px;top:533px;font-size:22.5px;line-height:22.5px;color:#171a1c;">0</span>
<div class="b" style="left:1338px;top:581.0px;width:28px;height:28px;background:#3e6bc2;border-radius:6px;"></div>
<svg class="i" style="left:1338.00px;top:581.00px" width="28" height="28" viewBox="0 0 24 24" fill="#fff"><path d="M9 16.17 4.83 12l-1.42 1.41L9 19 21 7l-1.41-1.41z"/></svg>
<span class="t" style="left:1381.54px;top:585px;font-size:22.5px;line-height:22.5px;color:#171a1c;letter-spacing:0.022px;">coord_ra</span>
<div class="b" style="left:1577px;top:572.0px;width:154px;height:41.5px;background:#fbfcfe;border:2px solid #cdd7e1;border-radius:8px;box-shadow:0 2px 3px rgba(21,21,21,0.08);"></div>
<span class="t" style="left:1748.56px;top:585px;font-size:22.5px;line-height:22.5px;color:#171a1c;letter-spacing:0.927px;">deg</span>
<span class="t" style="left:1855.05px;top:585px;font-size:22.5px;line-height:22.5px;color:#171a1c;letter-spacing:0.212px;">pos.eq.ra;meta.main</span>
<div class="b" style="left:2213.65px;top:581.00px;width:384.35px;height:30.5px;overflow:hidden"><span class="t" style="left:2px;top:4px;font-size:22.5px;line-height:22.5px;color:#171a1c;letter-spacing:-0.253px">Fiducial ICRS Right Ascension of centroid used for database indexing</span></div>
<span class="t" style="left:2607.56px;top:585px;font-size:22.5px;line-height:22.5px;color:#171a1c;letter-spacing:0.976px;">double</span>
<span class="t" style="left:3108.92px;top:585px;font-size:22.5px;line-height:22.5px;color:#171a1c;">0</span>
<span class="t" style="left:3465.42px;top:585px;font-size:22.5px;line-height:22.5px;color:#171a1c;">0</span>
<span class="t" style="left:3516.42px;top:585px;font-size:22.5px;line-height:22.5px;color:#171a1c;">0</span>
<div class="b" style="left:1338px;top:633.0px;width:28px;height:28px;background:#3e6bc2;border-radius:6px;"></div>
<svg class="i" style="left:1338.00px;top:633.00px" width="28" height="28" viewBox="0 0 24 24" fill="#fff"><path d="M9 16.17 4.83 12l-1.42 1.41L9 19 21 7l-1.41-1.41z"/></svg>
<span class="t" style="left:1381.56px;top:637px;font-size:22.5px;line-height:22.5px;color:#171a1c;letter-spacing:0.038px;">g_calibFlux</span>
<div class="b" style="left:1577px;top:624.0px;width:154px;height:41.5px;background:#fbfcfe;border:2px solid #cdd7e1;border-radius:8px;box-shadow:0 2px 3px rgba(21,21,21,0.08);"></div>
<span class="t" style="left:1598.69px;top:634px;font-size:26.5px;line-height:26.5px;color:#171a1c;letter-spacing:-1.521px;">&gt; 20 an</span>
<span class="t" style="left:1680.58px;top:634px;font-size:26.5px;line-height:26.5px;color:#171a1c;letter-spacing:4.126px;">...</span>
<span class="t" style="left:1748.01px;top:637px;font-size:22.5px;line-height:22.5px;color:#171a1c;letter-spacing:0.762px;">nJy</span>
<div class="b" style="left:2213.65px;top:633.00px;width:384.35px;height:30.5px;overflow:hidden"><span class="t" style="left:2px;top:4px;font-size:22.5px;line-height:22.5px;color:#171a1c;letter-spacing:-0.063px">Flux within 12.0-pixel aperture. Measured on g-band.</span></div>
<span class="t" style="left:2607.56px;top:637px;font-size:22.5px;line-height:22.5px;color:#171a1c;letter-spacing:0.976px;">double</span>
<span class="t" style="left:3108.92px;top:637px;font-size:22.5px;line-height:22.5px;color:#171a1c;">0</span>
<span class="t" style="left:3465.42px;top:637px;font-size:22.5px;line-height:22.5px;color:#171a1c;">0</span>
<span class="t" style="left:3516.42px;top:637px;font-size:22.5px;line-height:22.5px;color:#171a1c;">0</span>
<div class="b" style="left:1338px;top:685.0px;width:28px;height:28px;background:#3e6bc2;border-radius:6px;"></div>
<svg class="i" style="left:1338.00px;top:685.00px" width="28" height="28" viewBox="0 0 24 24" fill="#fff"><path d="M9 16.17 4.83 12l-1.42 1.41L9 19 21 7l-1.41-1.41z"/></svg>
<span class="t" style="left:1380.99px;top:689px;font-size:22.5px;line-height:22.5px;color:#171a1c;letter-spacing:0.195px;">i_calibFlux</span>
<div class="b" style="left:1577px;top:676.0px;width:154px;height:41.5px;background:#fbfcfe;border:2px solid #cdd7e1;border-radius:8px;box-shadow:0 2px 3px rgba(21,21,21,0.08);"></div>
<span class="t" style="left:1598.69px;top:686px;font-size:26.5px;line-height:26.5px;color:#171a1c;letter-spacing:-1.521px;">&gt; 20 an</span>
<span class="t" style="left:1680.58px;top:686px;font-size:26.5px;line-height:26.5px;color:#171a1c;letter-spacing:4.126px;">...</span>
<span class="t" style="left:1748.01px;top:689px;font-size:22.5px;line-height:22.5px;color:#171a1c;letter-spacing:0.762px;">nJy</span>
<div class="b" style="left:2213.65px;top:685.00px;width:384.35px;height:30.5px;overflow:hidden"><span class="t" style="left:2px;top:4px;font-size:22.5px;line-height:22.5px;color:#171a1c;letter-spacing:-0.063px">Flux within 12.0-pixel aperture. Measured on i-band.</span></div>
<span class="t" style="left:2607.56px;top:689px;font-size:22.5px;line-height:22.5px;color:#171a1c;letter-spacing:0.976px;">double</span>
<span class="t" style="left:3108.92px;top:689px;font-size:22.5px;line-height:22.5px;color:#171a1c;">0</span>
<span class="t" style="left:3465.42px;top:689px;font-size:22.5px;line-height:22.5px;color:#171a1c;">0</span>
<span class="t" style="left:3516.42px;top:689px;font-size:22.5px;line-height:22.5px;color:#171a1c;">0</span>
<div class="b" style="left:1338px;top:737.0px;width:28px;height:28px;background:#3e6bc2;border-radius:6px;"></div>
<svg class="i" style="left:1338.00px;top:737.00px" width="28" height="28" viewBox="0 0 24 24" fill="#fff"><path d="M9 16.17 4.83 12l-1.42 1.41L9 19 21 7l-1.41-1.41z"/></svg>
<span class="t" style="left:1381.01px;top:741px;font-size:22.5px;line-height:22.5px;color:#171a1c;letter-spacing:0.195px;">r_calibFlux</span>
<div class="b" style="left:1577px;top:728.0px;width:154px;height:41.5px;background:#f5e4cc;border:2px solid #cdd7e1;border-radius:8px;box-shadow:0 2px 3px rgba(21,21,21,0.08);"></div>
<span class="t" style="left:1598.69px;top:738px;font-size:26.5px;line-height:26.5px;color:#171a1c;letter-spacing:-1.521px;">&gt; 20 an</span>
<span class="t" style="left:1680.58px;top:738px;font-size:26.5px;line-height:26.5px;color:#171a1c;letter-spacing:4.126px;">...</span>
<span class="t" style="left:1748.01px;top:741px;font-size:22.5px;line-height:22.5px;color:#171a1c;letter-spacing:0.762px;">nJy</span>
<div class="b" style="left:2213.65px;top:737.00px;width:384.35px;height:30.5px;overflow:hidden"><span class="t" style="left:2px;top:4px;font-size:22.5px;line-height:22.5px;color:#171a1c;letter-spacing:-0.063px">Flux within 12.0-pixel aperture. Measured on r-band.</span></div>
<span class="t" style="left:2607.56px;top:741px;font-size:22.5px;line-height:22.5px;color:#171a1c;letter-spacing:0.976px;">double</span>
<span class="t" style="left:3108.92px;top:741px;font-size:22.5px;line-height:22.5px;color:#171a1c;">0</span>
<span class="t" style="left:3465.42px;top:741px;font-size:22.5px;line-height:22.5px;color:#171a1c;">0</span>
<span class="t" style="left:3516.42px;top:741px;font-size:22.5px;line-height:22.5px;color:#171a1c;">0</span>
</div></body></html>
